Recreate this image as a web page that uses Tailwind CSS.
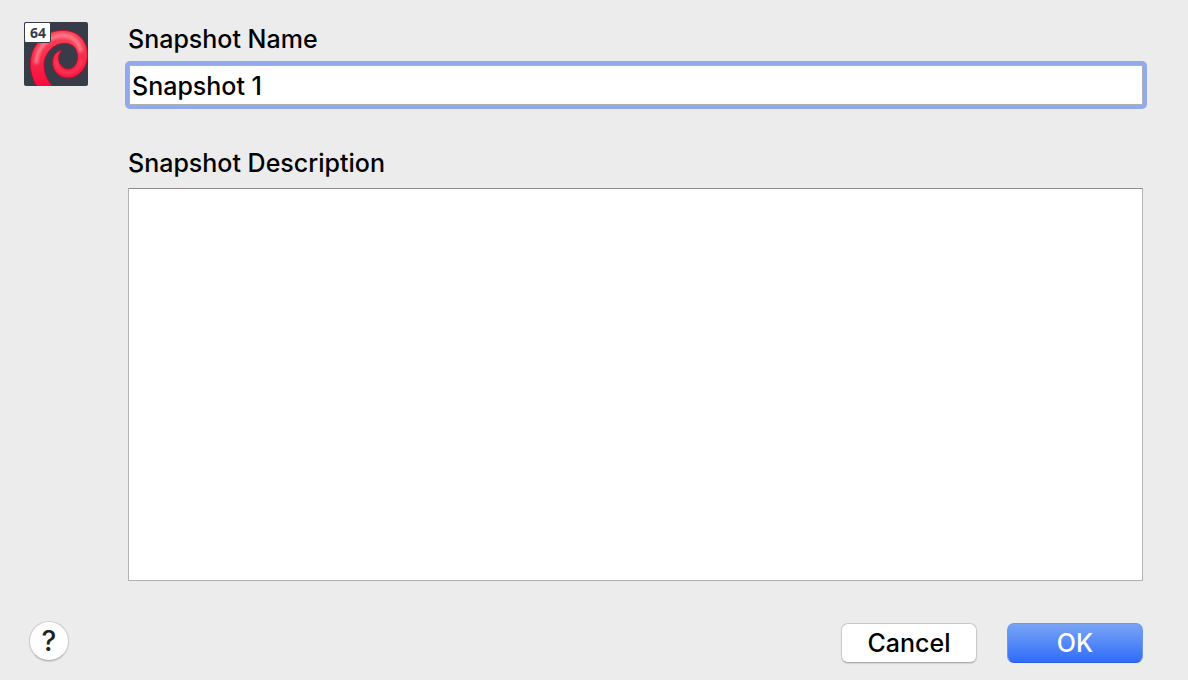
<!DOCTYPE html>
<html lang="en">
<head>
<meta charset="utf-8">
<meta name="viewport" content="width=device-width, initial-scale=1">
<title>Snapshot</title>
<script src="https://cdn.jsdelivr.net/npm/@tailwindcss/browser@4"></script>
</head>
<body class="bg-[#ececec] font-[Inter,sans-serif] text-[25px] leading-8 font-medium text-black">
<form class="flex min-h-screen flex-col pt-[23px] pr-[45px] pb-[17px] pl-6">
  <div class="flex flex-1 gap-10">
    <svg class="-mt-px size-16 shrink-0" viewBox="0 0 64 64" role="img" aria-label="Application, 64-bit">
      <defs>
        <linearGradient id="body" x1="0" y1="0" x2="0" y2="1">
          <stop offset="0" stop-color="#f9465c"/>
          <stop offset="0.45" stop-color="#f62c4c"/>
          <stop offset="1" stop-color="#f90a3c"/>
        </linearGradient>
        <clipPath id="tile"><rect width="64" height="64" rx="2"/></clipPath>
        <filter id="soft" x="-20%" y="-20%" width="140%" height="140%"><feGaussianBlur stdDeviation="1.6"/></filter>
        <clipPath id="curl"><use href="#swirl"/></clipPath>
      </defs>
      <g clip-path="url(#tile)">
        <rect width="64" height="64" fill="#373c48"/>
        <path id="swirl" d="M13 65C8.500 57 6.300 50 6.300 42C6.300 34 8.500 28 12 23C18 13 27 8.500 38.700 8.500C47 8.500 53 11 57.500 16C61.500 20.500 63.500 26 63.500 33C63.500 41 60.500 47.500 55.300 51.700C52 54.500 48.500 56 44 56C39.500 56 36 54.500 33 51.500C30 48.500 28.600 45 28.600 40.500C28.600 34 31.500 29.500 38 28.300C35.200 31 34.200 34 34.600 37.500C35.200 43 39.500 47 44 47C50 47 53.600 41.500 53.600 34.500C53.600 26.500 48.500 21.300 40.500 21.300C35 21.300 30.500 23.500 27 27C22.500 31.500 20 37 20 43C20 51 23 58 29 65Z" fill="url(#body)" stroke="#c10a2a" stroke-width="0.9"/>
        <g clip-path="url(#curl)">
          <path d="M12 42C13 25 24 14 38 13.500C49 13.500 56 21 57 30" fill="none" stroke="#ff9ca5" stroke-width="4" opacity="0.7" filter="url(#soft)"/>
          <path d="M32 38C32 46 37 51 44 51C51 50.500 56 45 58 38" fill="none" stroke="#ff7186" stroke-width="2" opacity="0.5" filter="url(#soft)"/>
        </g>
      </g>
      <rect x="0.5" y="0.5" width="26" height="20" rx="1.500" fill="#fff" stroke="#373c48"/>
      <text x="14" y="16" text-anchor="middle" font-family="Open Sans, sans-serif" font-size="14" font-weight="700" fill="#373c48">64</text>
    </svg>
    <div class="flex min-w-0 flex-1 flex-col">
      <label for="name">Snapshot Name</label>
      <input id="name" type="text" value="Snapshot 1" class="mt-[10px] ml-px h-10 border border-[#adb0b5] bg-white px-0.5 pt-0.5 shadow-[0_0_0_3px_#90aaed] outline-4 outline-[#90aaed] rounded-[1px]">
      <label for="description" class="mt-[42px]">Snapshot Description</label>
      <textarea id="description" class="mt-[9px] flex-1 resize-none border border-[#b3b3b3] border-t-[#8c8c8c] bg-white px-1 outline-none"></textarea>
    </div>
  </div>
  <div class="mt-10 flex items-end gap-[30px]">
    <button type="button" aria-label="Help" class="mr-auto mb-0.5 ml-[5px] flex size-10 items-center justify-center rounded-full border border-[#cfcfcf] border-b-[#b9b9b9] bg-white text-[28px] text-[#222] shadow-[0_1px_1px_rgba(0,0,0,0.12)]">?</button>
    <button type="button" class="h-10 w-[136px] rounded-[7px] border border-[#c8c8c8] border-b-[#b0b0b0] bg-white shadow-[0_1px_1px_rgba(0,0,0,0.12)]">Cancel</button>
    <button type="submit" class="h-10 w-[136px] rounded-[7px] border border-[#6e98ef] border-b-[#2a5fe8] bg-linear-to-b from-[#7ba5f5] to-[#2e69f8] bg-origin-border text-white">OK</button>
  </div>
</form>
</body>
</html>
